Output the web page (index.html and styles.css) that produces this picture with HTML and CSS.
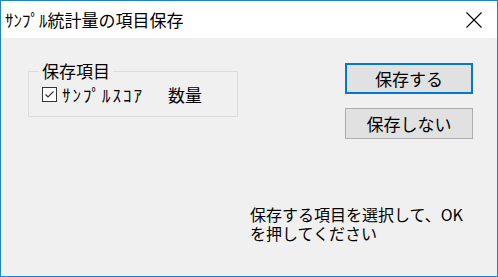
FILE: index.html
```html
<!DOCTYPE html>
<html lang="ja">
<head>
  <meta charset="UTF-8">
  <title>サンプル統計量の項目保存</title>
  <link rel="stylesheet" href="styles.css">
</head>
<body>

  <!-- Dialog Window -->
  <div class="window">
    <div class="titlebar">
      <span class="title">ｻﾝﾌﾟﾙ統計量の項目保存</span>
      <div class="close-btn">
        <svg width="16" height="16" viewBox="0 0 16 16">
          <path d="M0.5 0.5 L15.5 15.5 M15.5 0.5 L0.5 15.5" stroke="#000" stroke-width="1.1" fill="none"/>
        </svg>
      </div>
    </div>

    <div class="client">
      <div class="top">
        <fieldset class="group">
          <legend>保存項目</legend>
          <div class="group-row">
            <label class="check">
              <span class="check-box">
                <svg width="13" height="13" viewBox="0 0 13 13">
                  <path d="M2.5 6.5 L5 9 L10.5 3.5" stroke="#333" stroke-width="1.2" fill="none"/>
                </svg>
              </span>
              <span class="check-label">ｻﾝﾌﾟﾙｽｺｱ</span>
            </label>
            <span class="item">数量</span>
          </div>
        </fieldset>

        <div class="buttons">
          <button class="btn btn-default">保存する</button>
          <button class="btn">保存しない</button>
        </div>
      </div>

      <div class="message">
        <div class="message-line">保存する項目を選択して、OK</div>
        <div class="message-line">を押してください</div>
      </div>
    </div>
  </div>

</body>
</html>
```

FILE: styles.css
```css
/* Basic Reset */
* {
  margin: 0;
  padding: 0;
  box-sizing: border-box;
}

body {
  width: 498px;
  height: 277px;
  overflow: hidden;
  background-color: #f0f0f0;
  font-family: 'Noto Sans CJK JP', 'Liberation Sans', sans-serif;
  color: #000;
}

/* Window */
.window {
  display: flex;
  flex-direction: column;
  width: 498px;
  height: 277px;
  border: 1px solid #1883d7;
  background-color: #f0f0f0;
}

/* Title Bar */
.titlebar {
  display: flex;
  justify-content: space-between;
  align-items: center;
  height: 37px;
  background-color: #fff;
}

.title {
  padding-left: 4px;
  font-size: 17px;
  line-height: 20px;
}

.close-btn {
  display: flex;
  justify-content: center;
  align-items: center;
  width: 46px;
  height: 37px;
}

/* Client Area */
.client {
  flex: 1;
  padding: 23px 24px 0 27px;
}

.top {
  display: flex;
  justify-content: space-between;
  align-items: flex-start;
}

/* Group Box */
.group {
  width: 210px;
  height: 56px;
  border: 1px solid #dcdcdc;
  padding: 0 0 0 10px;
}

.group legend {
  padding: 0 3px;
  font-size: 17px;
  line-height: 20px;
}

.group-row {
  display: flex;
  align-items: center;
  height: 24px;
  margin-top: 1px;
}

.check {
  display: flex;
  align-items: center;
  margin-left: 3px;
}

.check-box {
  display: flex;
  justify-content: center;
  align-items: center;
  width: 15px;
  height: 15px;
  border: 1px solid #333;
  background-color: #fff;
}

.check-label {
  margin-left: 5px;
  font-size: 17px;
  letter-spacing: 2px;
}

.item {
  margin-left: 24px;
  font-size: 17px;
}

/* Buttons */
.buttons {
  display: flex;
  flex-direction: column;
  gap: 14px;
  margin-top: 2px;
}

.btn {
  width: 128px;
  height: 31px;
  border: 1px solid #adadad;
  background-color: #e1e1e1;
  font-family: 'Noto Sans CJK JP', sans-serif;
  font-size: 17px;
  color: #000;
}

.btn-default {
  border: 2px solid #0078d7;
}

/* Message */
.message {
  margin: 66px 0 0 222px;
  font-size: 16px;
}

.message-line {
  height: 19px;
  line-height: 19px;
}
```
